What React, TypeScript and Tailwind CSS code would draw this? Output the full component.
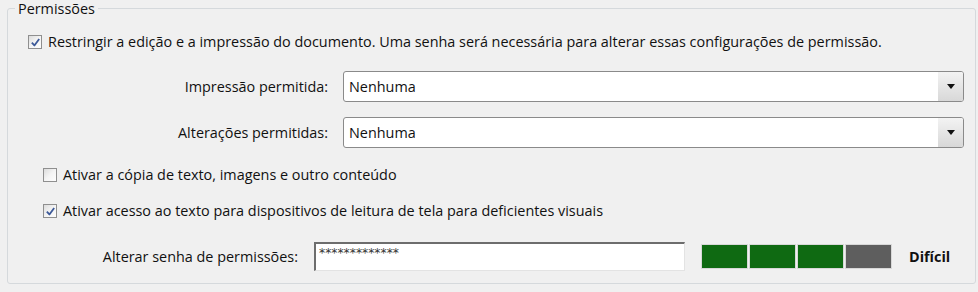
import React from "react";

function CheckBox({ checked }: { checked: boolean }) {
  return (
    <span className="flex h-[14px] w-[14px] shrink-0 items-center justify-center border border-[#8f8f8f] bg-gradient-to-br from-[#dcdcdc] via-[#f4f4f4] to-[#fdfdfd]">
      {checked && (
        <svg viewBox="0 0 12 12" className="h-[11px] w-[11px]">
          <path d="M2 6.2 L4.8 9.2 L10 2.2" fill="none" stroke="#3d5a99" strokeWidth="2" strokeLinejoin="round" />
        </svg>
      )}
    </span>
  );
}

function Select({ value }: { value: string }) {
  return (
    <div className="flex h-[31px] w-[621px] items-stretch rounded-[3px] border border-[#8a8a8a] bg-white shadow-[inset_0_0_0_1px_#ffffff]">
      <div className="flex flex-1 items-center pl-[5px] text-[#111]">{value}</div>
      <div className="flex w-[25px] items-center justify-center rounded-r-[2px] bg-gradient-to-b from-[#f3f3f3] to-[#d8d8d8]">
        <svg viewBox="0 0 8 5" className="h-[5px] w-[8px]">
          <path d="M0 0 L8 0 L4 5 Z" fill="#111" />
        </svg>
      </div>
    </div>
  );
}

export default function App() {
  const bars = ["#0f6a12", "#0f6a12", "#0f6a12", "#5e5e5e"];
  return (
    <div className="h-[292px] w-[978px] bg-[#f0f0f0] text-[14.4px] text-[#111]" style={{ fontFamily: '"Open Sans", "Noto Sans", sans-serif' }}>
      <fieldset className="ml-[7px] h-[284px] w-[969px] rounded-[3px] border border-[#d5d9dc]">
        <legend className="ml-[7px] px-[3px] leading-[17px]">Permissões</legend>

        <div className="flex flex-col">
          <div className="mt-[17px] flex h-[16px] items-center gap-[6px] pl-[20px]">
            <CheckBox checked />
            <span>Restringir a edição e a impressão do documento. Uma senha será necessária para alterar essas configurações de permissão.</span>
          </div>

          <div className="mt-[21px] flex items-center">
            <span className="w-[320px] text-right">Impressão permitida:</span>
            <div className="ml-[15px]"><Select value="Nenhuma" /></div>
          </div>

          <div className="mt-[15px] flex items-center">
            <span className="w-[320px] text-right">Alterações permitidas:</span>
            <div className="ml-[15px]"><Select value="Nenhuma" /></div>
          </div>

          <div className="mt-[19px] flex h-[16px] items-center gap-[6px] pl-[35px]">
            <CheckBox checked={false} />
            <span>Ativar a cópia de texto, imagens e outro conteúdo</span>
          </div>

          <div className="mt-[20px] flex h-[16px] items-center gap-[6px] pl-[35px]">
            <CheckBox checked />
            <span>Ativar acesso ao texto para dispositivos de leitura de tela para deficientes visuais</span>
          </div>

          <div className="mt-[23px] flex items-center">
            <span className="w-[290px] text-right">Alterar senha de permissões:</span>
            <div className="ml-[16px] flex h-[29px] w-[371px] items-start border-l-2 border-t-2 border-r border-b border-l-[#6d6d6d] border-t-[#6d6d6d] border-r-[#e3e3e3] border-b-[#e3e3e3] bg-white pl-[3px] pt-[2px]">
              <span className="text-[12.3px] leading-[14px] text-[#333]" style={{ fontFamily: '"DejaVu Sans", sans-serif' }}>*************</span>
            </div>
            <div className="ml-[16px] flex gap-[1px]">
              {bars.map((c, i) => (
                <div key={i} className="h-[25px] w-[47px] border border-[#d8d8d8]" style={{ backgroundColor: c }} />
              ))}
            </div>
            <span className="ml-[17px] font-bold">Difícil</span>
          </div>
        </div>
      </fieldset>
    </div>
  );
}
